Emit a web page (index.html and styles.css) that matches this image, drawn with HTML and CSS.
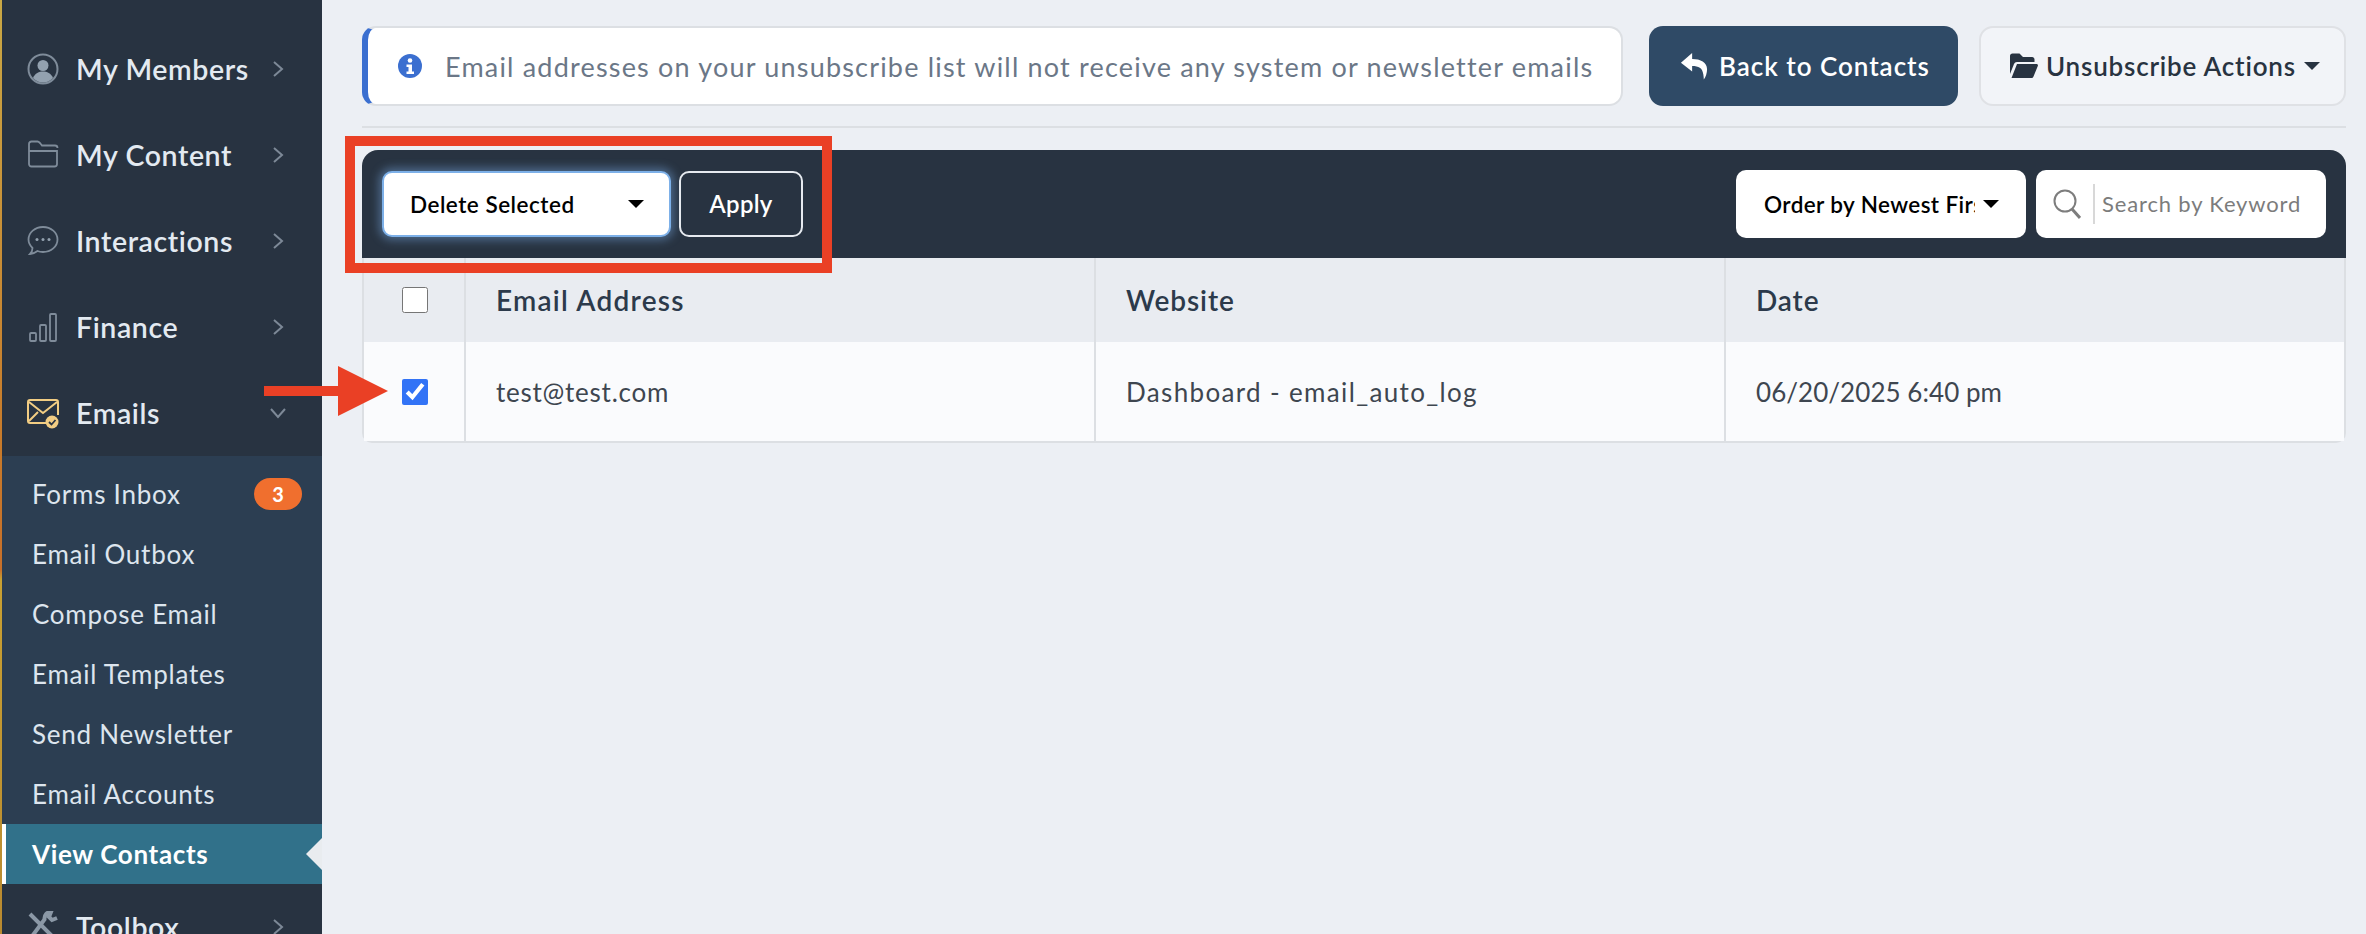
FILE: index.html
```html
<!DOCTYPE html>
<html lang="en">
<head>
  <meta charset="UTF-8">
  <meta name="viewport" content="width=device-width, initial-scale=1.0">
  <title>Unsubscribe List</title>
  <link rel="stylesheet" href="styles.css">
</head>
<body>
  <div class="page">
    <div class="sidebar">
      <div class="nav-item">
        <svg class="nav-icon" viewBox="0 0 32 32"><circle cx="16" cy="16" r="14.5" fill="none" stroke="#7f8c9a" stroke-width="2"/><circle cx="16" cy="12.5" r="5.5" fill="#93a1af"/><path d="M6 25c2-5 6-6.500 10-6.500s8 1.500 10 6.500c-3 3-6.500 4.500-10 4.500s-7-1.500-10-4.500z" fill="#93a1af"/></svg>
        <span class="nav-label">My Members</span>
        <svg class="chevron" viewBox="0 0 12 18"><path d="M2 2l8 7-8 7"/></svg>
      </div>
      <div class="nav-item">
        <svg class="nav-icon" viewBox="0 0 32 32"><path d="M2 12V5c0-1.500 1-2.500 2.500-2.500h6c1 0 1.500.5 2.500 1.500l2 2.500h13c1.500 0 2.500 1 2.500 2.500M2 12h28v13c0 1.500-1 2.500-2.500 2.500h-23C3 27.500 2 26.500 2 25z" fill="none" stroke="#7f8c9a" stroke-width="1.800"/></svg>
        <span class="nav-label">My Content</span>
        <svg class="chevron" viewBox="0 0 12 18"><path d="M2 2l8 7-8 7"/></svg>
      </div>
      <div class="nav-item">
        <svg class="nav-icon" viewBox="0 0 32 32"><path d="M16 2c8 0 14.500 5.500 14.500 12.500S24 27 16 27c-2 0-4-.3-5.500-1-2 1.500-4.500 3-7.500 3 1.500-1.500 2.500-3.500 2.500-6C3 20.500 1.500 17.500 1.500 14.500 1.500 7.500 8 2 16 2z" fill="none" stroke="#7f8c9a" stroke-width="1.800"/><circle cx="10" cy="14.500" r="1.500" fill="#93a1af"/><circle cx="16" cy="14.500" r="1.500" fill="#93a1af"/><circle cx="22" cy="14.500" r="1.500" fill="#93a1af"/></svg>
        <span class="nav-label">Interactions</span>
        <svg class="chevron" viewBox="0 0 12 18"><path d="M2 2l8 7-8 7"/></svg>
      </div>
      <div class="nav-item">
        <svg class="nav-icon" viewBox="0 0 32 32" fill="none" stroke="#7f8c9a" stroke-width="1.800"><rect x="3" y="22" width="6" height="8" rx="1"/><rect x="13" y="14" width="6" height="16" rx="1"/><rect x="23" y="3" width="6" height="27" rx="1"/></svg>
        <span class="nav-label">Finance</span>
        <svg class="chevron" viewBox="0 0 12 18"><path d="M2 2l8 7-8 7"/></svg>
      </div>
      <div class="nav-item">
        <svg class="nav-icon" viewBox="0 0 32 32" fill="none" stroke="#f2cd83" stroke-width="2"><path d="M20 26H3c-1 0-2-1-2-2V5c0-1 1-2 2-2h26c1 0 2 1 2 2v13M2 5l14 11L30 5M2 24l9-9"/><circle cx="25" cy="25" r="6.500" fill="#f2cd83" stroke="none"/><path d="M22 25l2.500 2.500L28.500 23" stroke="#283341" stroke-width="1.800"/></svg>
        <span class="nav-label">Emails</span>
        <svg class="chevron chevron-down" viewBox="0 0 18 12"><path d="M2 2l7 8 7-8"/></svg>
      </div>
      <div class="submenu">
        <div class="sub-item">Forms Inbox <span class="badge">3</span></div>
        <div class="sub-item">Email Outbox</div>
        <div class="sub-item">Compose Email</div>
        <div class="sub-item">Email Templates</div>
        <div class="sub-item">Send Newsletter</div>
        <div class="sub-item">Email Accounts</div>
        <div class="sub-item active">View Contacts</div>
      </div>
      <div class="nav-item">
        <svg class="nav-icon" viewBox="0 0 32 32" fill="none" stroke="#8b98a6" stroke-width="4"><path d="M3 3l26 26M30 7l-5 2-3-3 2-5c-4 0-7 3-6.500 7.500L3 28"/></svg>
        <span class="nav-label">Toolbox</span>
        <svg class="chevron" viewBox="0 0 12 18"><path d="M2 2l8 7-8 7"/></svg>
      </div>
    </div>

    <div class="main">
      <div class="top-row">
        <div class="notice">
          <svg class="notice-icon" viewBox="0 0 24 24"><circle cx="12" cy="12" r="12" fill="#3b6fd0"/><circle cx="12" cy="6.500" r="2.300" fill="#fff"/><path d="M8.500 10.500h5.500v7h2v2.500H8.500v-2.500h2v-4.500h-2z" fill="#fff"/></svg>
          <span>Email addresses on your unsubscribe list will not receive any system or newsletter emails</span>
        </div>
        <div class="btn btn-back">
          <svg class="btn-icon" viewBox="0 0 28 30"><path d="M12 1L0 11.500 12 21v-6c7 0 11 2 12 9 .3 2 .5 4 .5 5.500 2-2.500 3.500-7 3.500-11C28 11 21 7.500 12 7.500z" fill="#fff"/></svg>
          Back to Contacts
        </div>
        <div class="btn btn-actions">
          <svg class="btn-icon" viewBox="0 0 28 26"><path d="M0 3c0-1.500 1-2.500 2.500-2.500h7L13 4h9c1.500 0 2.500 1 2.500 2.500V9H7c-1.500 0-2.500.7-3 2L0 21z" fill="#283341"/><path d="M7 11h19.500c1 0 1.800 1 1.300 2l-4.300 10.500c-.4 1-1.200 1.500-2.200 1.500H1.500z" fill="#283341"/></svg>
          Unsubscribe Actions
          <span class="caret caret-small"></span>
        </div>
      </div>
      <div class="rule"></div>

      <div class="toolbar">
        <div class="select-box">
          <span>Delete Selected</span>
          <span class="caret"></span>
        </div>
        <div class="apply-btn">Apply</div>
        <div class="order-box">
          <span class="order-text">Order by Newest First</span>
          <span class="caret"></span>
        </div>
        <div class="search-box">
          <svg class="search-icon" viewBox="0 0 28 30" fill="none" stroke="#7d7d7d" stroke-width="2"><circle cx="12" cy="12" r="10.500"/><path d="M19 20l8 9" stroke-width="3"/></svg>
          <span class="search-text">Search by Keyword</span>
        </div>
      </div>

      <table class="list">
        <tr class="head-row">
          <th class="check-col"><input type="checkbox"></th>
          <th class="email-col">Email Address</th>
          <th class="site-col">Website</th>
          <th>Date</th>
        </tr>
        <tr class="data-row">
          <td class="check-col"><input type="checkbox" checked></td>
          <td>test@test.com</td>
          <td class="cell-site">Dashboard - email_auto_log</td>
          <td class="cell-date">06/20/2025 6:40 pm</td>
        </tr>
      </table>
    </div>

    <!-- annotations on top of the screenshot -->
    <div class="mark-box"></div>
    <svg class="mark-arrow" viewBox="0 0 124 50"><path d="M0 20h74V0l50 25-50 25V30H0z" fill="#ea4025"/></svg>
  </div>
</body>
</html>
```

FILE: styles.css
```css
* {
  box-sizing: border-box;
}

html, body {
  margin: 0;
  height: 100%;
  overflow: hidden;
}

body {
  font-family: Lato, "Open Sans", sans-serif;
  background-color: #eceff4;
}

.page {
  position: relative;
  display: flex;
  height: 934px;
  overflow: hidden;
}

/* sidebar */
.sidebar {
  flex: 0 0 322px;
  height: 934px;
  padding-top: 26px;
  background-color: #283341;
  border-left: 2px solid;
  border-image: linear-gradient(#c9a845 0%, #c87a2a 48%, #c8702a 61%, #c9a032 62%, #b98a30 100%) 1;
  overflow: hidden;
}

.nav-item {
  display: flex;
  align-items: center;
  height: 86px;
  padding-left: 25px;
  color: #e3eaf1;
}

.nav-icon {
  flex: none;
  width: 32px;
  height: 32px;
}

.nav-label {
  flex: 1;
  margin-left: 17px;
  font-size: 28.5px;
  font-weight: 600;
  letter-spacing: .6px;
}

.chevron {
  flex: none;
  width: 12px;
  height: 18px;
  margin-right: 38px;
  fill: none;
  stroke: #7d8997;
  stroke-width: 2;
}

.chevron-down {
  width: 18px;
  height: 12px;
  margin-right: 35px;
}

.submenu {
  padding-top: 8px;
  background-color: #2c3e52;
}

.sub-item {
  display: flex;
  align-items: center;
  justify-content: space-between;
  height: 60px;
  padding: 0 20px 0 30px;
  font-size: 26px;
  letter-spacing: .75px;
  color: #dde5ee;
}

.badge {
  width: 48px;
  height: 32px;
  border-radius: 16px;
  background-color: #f06f2e;
  color: #fff;
  font-size: 20px;
  font-weight: 700;
  letter-spacing: 0;
  line-height: 32px;
  text-align: center;
}

.sub-item.active {
  position: relative;
  padding-left: 26px;
  background-color: #31718a;
  border-left: 4px solid #fff;
  color: #fff;
  font-weight: 700;
  letter-spacing: .65px;
}

.sub-item.active::after {
  content: "";
  position: absolute;
  right: 0;
  top: 14px;
  border-top: 16px solid transparent;
  border-bottom: 16px solid transparent;
  border-right: 16px solid #e9ecef;
}

/* main column */
.main {
  flex: 1;
  min-width: 0;
  padding: 26px 20px 0 40px;
}

.top-row {
  display: flex;
  align-items: stretch;
  height: 80px;
}

.notice {
  display: flex;
  align-items: center;
  width: 1261px;
  padding-left: 30px;
  background-color: #fff;
  border: 2px solid #dcdfe3;
  border-left: 6px solid #3b6fd0;
  border-radius: 14px;
  font-size: 27px;
  letter-spacing: 1.19px;
  color: #6b7787;
  white-space: nowrap;
}

.notice-icon {
  flex: none;
  width: 24px;
  height: 24px;
  margin-right: 23px;
}

.btn {
  display: flex;
  align-items: center;
  border-radius: 14px;
  font-size: 26px;
  font-weight: 600;
  white-space: nowrap;
}

.btn-icon {
  flex: none;
  width: 28px;
  height: 28px;
  margin-right: 11px;
}

.btn-back {
  width: 309px;
  margin-left: 26px;
  padding-left: 31px;
  background-color: #2f4a66;
  color: #fff;
  letter-spacing: .98px;
}

.btn-actions {
  width: 367px;
  margin-left: 21px;
  padding-left: 29px;
  background-color: #f2f4f8;
  border: 2px solid #dfe1e5;
  color: #283341;
  letter-spacing: .8px;
}

.btn-actions .btn-icon {
  margin-right: 8px;
}

.caret {
  flex: none;
  width: 0;
  height: 0;
  border-left: 8px solid transparent;
  border-right: 8px solid transparent;
  border-top: 8px solid #000;
}

.caret-small {
  margin-left: 8px;
  border-top-color: #283341;
}

.rule {
  height: 2px;
  margin-top: 20px;
  background-color: #dcdfe3;
}

.toolbar {
  display: flex;
  align-items: center;
  height: 108px;
  margin-top: 22px;
  padding: 0 20px;
  background-color: #283341;
  border-radius: 16px 16px 0 0;
}

.select-box {
  display: flex;
  align-items: center;
  justify-content: space-between;
  width: 289px;
  height: 66px;
  padding: 0 25px 0 26px;
  background-color: #fff;
  border: 2px solid #7db0e8;
  border-radius: 10px;
  box-shadow: 0 0 10px 3px rgba(125, 176, 232, .45);
  font-size: 22.5px;
  font-weight: 600;
  letter-spacing: .5px;
  color: #000;
}

.apply-btn {
  width: 124px;
  height: 66px;
  margin-left: 8px;
  border: 2px solid #e6eaef;
  border-radius: 10px;
  color: #fff;
  font-size: 24px;
  font-weight: 600;
  letter-spacing: .3px;
  line-height: 62px;
  text-align: center;
}

.order-box {
  display: flex;
  align-items: center;
  width: 290px;
  height: 68px;
  margin-left: auto;
  padding: 0 26px 0 28px;
  background-color: #fff;
  border-radius: 10px;
  font-size: 22.5px;
  font-weight: 600;
  letter-spacing: .4px;
  color: #000;
}

.order-text {
  width: 211px;
  margin-right: 8px;
  overflow: hidden;
  white-space: nowrap;
}

.search-box {
  display: flex;
  align-items: center;
  width: 290px;
  height: 68px;
  margin-left: 10px;
  padding-left: 17px;
  background-color: #fff;
  border-radius: 10px;
}

.search-icon {
  flex: none;
  width: 28px;
  height: 30px;
}

.search-text {
  margin-left: 12px;
  padding-left: 7px;
  line-height: 40px;
  border-left: 2px solid #d8d8d8;
  font-size: 22px;
  letter-spacing: .85px;
  color: #7c7c7c;
  white-space: nowrap;
}

/* table */
.list {
  width: 100%;
  table-layout: fixed;
  border-collapse: separate;
  border-spacing: 0;
  border: 2px solid #dcdfe3;
  border-top: 0;
  border-radius: 0 0 10px 10px;
}

.list th, .list td {
  padding: 0 0 0 30px;
  border-right: 2px solid #dcdfe3;
  text-align: left;
}

.list th:last-child, .list td:last-child {
  border-right: 0;
}

.list .check-col {
  width: 102px;
  padding: 0 0 0 2px;
  text-align: center;
}

.email-col {
  width: 630px;
}

.site-col {
  width: 630px;
}

.head-row {
  height: 84px;
  background-color: #e9ecf1;
  color: #2c3a4b;
  font-size: 28px;
  letter-spacing: .9px;
}

.head-row th {
  font-weight: 600;
}

.head-row .email-col {
  letter-spacing: 1.25px;
}

.data-row {
  height: 99px;
  background-color: #fafbfd;
  color: #3e4650;
  font-size: 26px;
  letter-spacing: .75px;
}

.data-row .cell-site {
  letter-spacing: 1.35px;
}

.data-row .cell-date {
  letter-spacing: .05px;
}

input[type="checkbox"] {
  display: block;
  width: 26px;
  height: 26px;
  margin: 0 auto;
  accent-color: #3273f6;
}

/* red annotations */
.mark-box {
  position: absolute;
  left: 345px;
  top: 136px;
  width: 487px;
  height: 137px;
  border: 10px solid #ea4025;
}

.mark-arrow {
  position: absolute;
  left: 264px;
  top: 366px;
  width: 124px;
  height: 50px;
}
```
